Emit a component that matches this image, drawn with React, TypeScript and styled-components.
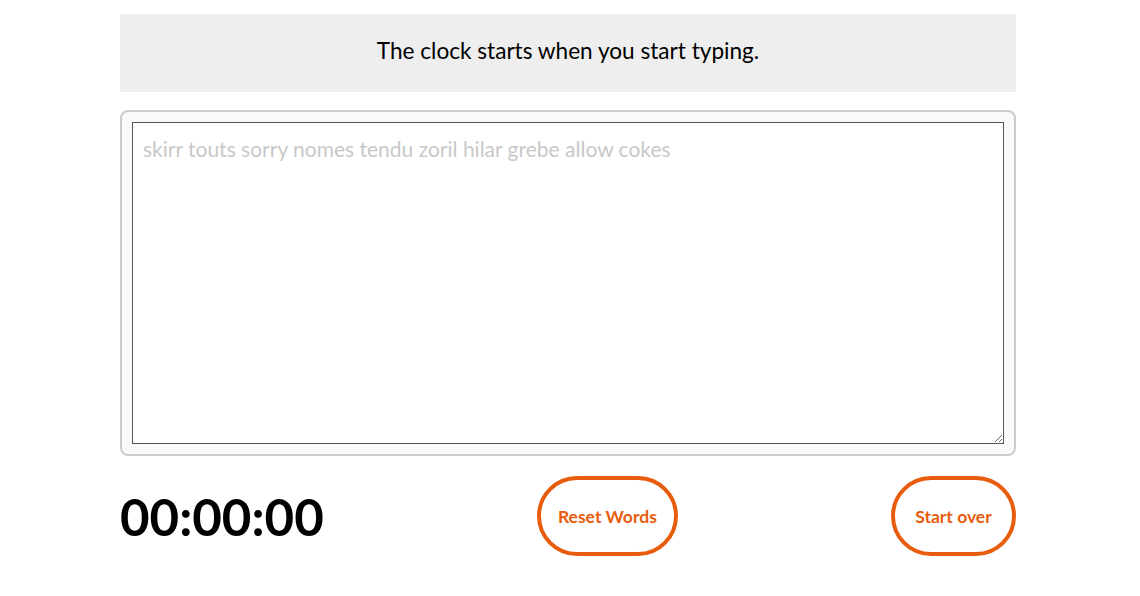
import React from "react";
import styled, { createGlobalStyle } from "styled-components";

const Global = createGlobalStyle`
  html, body { margin: 0; padding: 0; background: #fff; }
  body { font-family: Lato, "Noto Sans", sans-serif; color: #000; }
  * { box-sizing: border-box; }
`;

const Page = styled.div`
  width: 896px;
  margin: 14px 0 0 120px;
  display: flex;
  flex-direction: column;
`;

const Banner = styled.div`
  height: 78px;
  padding-bottom: 6px;
  background: #eeeeee;
  display: flex;
  align-items: center;
  justify-content: center;
  font-size: 22.6px;
`;

const Frame = styled.div`
  margin-top: 18px;
  border: 2px solid #cccccc;
  border-radius: 8px;
  background: #f9f9f9;
  padding: 10px;
`;

const Input = styled.textarea`
  display: block;
  width: 100%;
  height: 322px;
  border: 1px solid #555;
  background: #fff;
  padding: 13px 10px;
  font-family: Lato, "Noto Sans", sans-serif;
  font-size: 21px;
  color: #333;
  margin: 0;
  outline: none;
  &::placeholder { color: #c8c8c8; }
`;

const Controls = styled.div`
  margin-top: 20px;
  display: flex;
  align-items: center;
  justify-content: space-between;
`;

const Timer = styled.div`
  font-size: 51px;
  font-weight: 700;
  line-height: 1;
`;

const Pill = styled.button<{ $w: number }>`
  width: ${(p) => p.$w}px;
  height: 80px;
  border: 4px solid #e85c0d;
  border-radius: 40px;
  background: #fff;
  color: #e85c0d;
  font-family: Lato, "Noto Sans", sans-serif;
  font-weight: 700;
  font-size: 17.5px;
  padding: 0;
  cursor: pointer;
`;

export default function App() {
  return (
    <>
      <Global />
      <Page>
        <Banner>The clock starts when you start typing.</Banner>
        <Frame>
          <Input placeholder="skirr touts sorry nomes tendu zoril hilar grebe allow cokes" />
        </Frame>
        <Controls>
          <Timer>00:00:00</Timer>
          <Pill $w={141}>Reset Words</Pill>
          <Pill $w={125}>Start over</Pill>
        </Controls>
      </Page>
    </>
  );
}
